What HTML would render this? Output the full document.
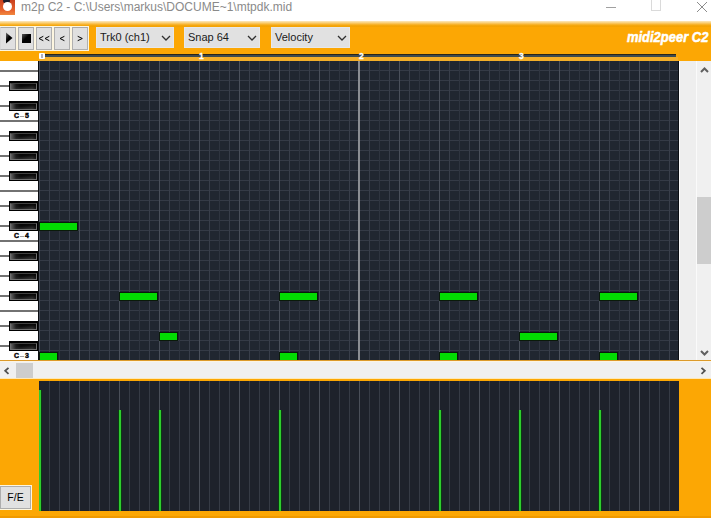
<!DOCTYPE html>
<html><head><meta charset="utf-8"><style>
*{margin:0;padding:0;box-sizing:border-box}
html,body{width:711px;height:518px;overflow:hidden;background:#fff;font-family:"Liberation Sans",sans-serif}
.a{position:absolute}
.btn{position:absolute;top:27px;width:16px;height:23px;background:#e0e0e0;border:1px solid #b0b0b0;border-top-color:#a8a8a8}
.dd{position:absolute;top:27px;height:21px;background:#e1e1e1;border:1px solid #e8e8e8;font-size:11px;color:#1a1a1a;line-height:19px;padding-left:3px}
.chev{position:absolute;top:7px;width:10px;height:6px}
.wk{position:absolute;left:0;width:38px;background:#727272}
.bk{position:absolute;left:9px;width:29px;height:10px;background:#000}
.bki{position:absolute;left:1px;top:2px;width:27px;height:7px;border:1px solid #707070;border-top-color:#404040;background:linear-gradient(to right,rgba(120,120,120,.8) 0,rgba(60,60,60,.4) 20%,rgba(0,0,0,0) 40%,rgba(0,0,0,0) 85%,rgba(0,0,0,.6) 100%),linear-gradient(172deg,#000 0,#0a0a0a 45%,#3a3a3a 100%)}
.lbl{position:absolute;font-size:7px;font-weight:bold;color:#000;line-height:7px;-webkit-text-stroke:0.4px #000}
.note{position:absolute;height:9px;border:1px solid #0a1a0a;background:#02dc02}
.vb{position:absolute;width:2px;background:#2ecc2e;box-shadow:1px 0 0 #0b3a12,-1px 0 0 #0b3a12}
.rd{position:absolute;top:52px;font-size:8.5px;font-weight:bold;color:#fff;line-height:8px;-webkit-text-stroke:0.3px #fff}
</style></head><body>

<div class="a" style="left:0;top:0;width:711px;height:20px;background:#fff"></div>
<div class="a" style="left:0;top:0;width:15px;height:15px;background:linear-gradient(180deg,#c8401e,#e8642e 70%,#f08840)"></div>
<div class="a" style="left:3px;top:-1px;width:7px;height:4px;background:#1a2030;border-radius:2px"></div>
<div class="a" style="left:2.5px;top:1.5px;width:9px;height:9px;background:#fff;border-radius:50%"></div>
<div class="a" style="left:21px;top:0px;font-size:12px;line-height:15px;color:#8a8a8a;white-space:pre">m2p C2 - C:\Users\markus\DOCUME~1\mtpdk.mid</div>
<div class="a" style="left:606px;top:7px;width:10px;height:1px;background:#a0a0a0"></div>
<div class="a" style="left:651px;top:-2px;width:10px;height:13px;border:1px solid #dadada"></div>
<svg class="a" style="left:696px;top:1px" width="12" height="12"><path d="M1 1L11 11M11 1L1 11" stroke="#8c8c8c" stroke-width="1"/></svg>
<div class="a" style="left:0;top:21px;width:711px;height:497px;background:#fca704"></div>
<div class="a" style="left:0;top:21px;width:711px;height:6px;background:linear-gradient(180deg,#fde8c0 0,#fbd890 20%,#f9c050 45%,#f5a810 70%,#f3a000 100%)"></div>
<div class="a" style="left:0;top:516px;width:711px;height:2px;background:#f09a00"></div>
<div class="a" style="left:0;top:26px;width:89px;height:25px;background:#fdf6e0"></div>
<div class="btn" style="left:0px;border-left-color:#d8d8d8"></div>
<div class="btn" style="left:18px"></div>
<div class="btn" style="left:36px"></div>
<div class="btn" style="left:54px"></div>
<div class="btn" style="left:72px"></div>
<svg class="a" style="left:0;top:27px" width="17" height="23"><defs><linearGradient id="pg" x1="0" y1="0" x2="1" y2="1"><stop offset="0" stop-color="#707070"/><stop offset="0.45" stop-color="#000"/></linearGradient></defs><path d="M6 5.5L12.5 11L6 16.5Z" fill="url(#pg)"/></svg>
<div class="a" style="left:22px;top:34px;width:9px;height:9px;background:linear-gradient(135deg,#555 0%,#000 45%,#000 100%)"></div>
<svg class="a" style="left:36px;top:27px" width="17" height="23"><path d="M7.3 9.3L3 11.5L7.3 13.7M13.3 9.3L9 11.5L13.3 13.7" stroke="#000" stroke-width="1" fill="none"/></svg>
<svg class="a" style="left:54px;top:27px" width="17" height="23"><path d="M10.4 9.3L6 11.5L10.4 13.7" stroke="#000" stroke-width="1" fill="none"/></svg>
<svg class="a" style="left:72px;top:27px" width="17" height="23"><path d="M5.7 9.3L10.3 11.5L5.7 13.7" stroke="#000" stroke-width="1" fill="none"/></svg>
<div class="dd" style="left:96px;width:78px">Trk0 (ch1)<svg class="chev" style="left:64px" width="10" height="6"><path d="M1 1L5 5L9 1" stroke="#303030" stroke-width="1.3" fill="none"/></svg></div>
<div class="dd" style="left:184px;width:76px">Snap 64<svg class="chev" style="left:62px" width="10" height="6"><path d="M1 1L5 5L9 1" stroke="#303030" stroke-width="1.3" fill="none"/></svg></div>
<div class="dd" style="left:271px;width:79px">Velocity<svg class="chev" style="left:65px" width="10" height="6"><path d="M1 1L5 5L9 1" stroke="#303030" stroke-width="1.3" fill="none"/></svg></div>
<div class="a" style="left:627px;top:30px;font-size:14px;font-weight:bold;font-style:italic;color:#fff;line-height:15px;white-space:pre;-webkit-text-stroke:0.5px #fff;transform-origin:0 0;transform:scaleX(0.925)">midi2peer C2</div>
<div class="a" style="left:39px;top:57px;width:639px;height:4px;background:#f3ae28"></div>
<div class="a" style="left:45px;top:54px;width:631px;height:1px;background:#2a2618"></div>
<div class="a" style="left:45px;top:55px;width:631px;height:2px;background:#3e4b4f"></div>
<div class="a" style="left:39px;top:53px;width:6px;height:6px;background:#fff;border-radius:1px"></div>
<div class="a" style="left:41px;top:54px;width:2px;height:4px;background:#b0b0c0"></div>
<div class="rd" style="left:199px">1</div>
<div class="rd" style="left:359px">2</div>
<div class="rd" style="left:519px">3</div>
<div class="a" style="left:0;top:61px;width:38px;height:299px;background:#fff"></div>
<div class="a" style="left:38px;top:61px;width:641px;height:299px;background:#202630;overflow:hidden">
<div class="a" style="left:0;top:9px;width:641px;height:1px;background:#343a46"></div>
<div class="a" style="left:0;top:19px;width:641px;height:1px;background:#343a46"></div>
<div class="a" style="left:0;top:29px;width:641px;height:1px;background:#343a46"></div>
<div class="a" style="left:0;top:39px;width:641px;height:1px;background:#343a46"></div>
<div class="a" style="left:0;top:49px;width:641px;height:1px;background:#343a46"></div>
<div class="a" style="left:0;top:59px;width:641px;height:1px;background:#343a46"></div>
<div class="a" style="left:0;top:69px;width:641px;height:1px;background:#343a46"></div>
<div class="a" style="left:0;top:79px;width:641px;height:1px;background:#343a46"></div>
<div class="a" style="left:0;top:89px;width:641px;height:1px;background:#343a46"></div>
<div class="a" style="left:0;top:99px;width:641px;height:1px;background:#343a46"></div>
<div class="a" style="left:0;top:109px;width:641px;height:1px;background:#343a46"></div>
<div class="a" style="left:0;top:119px;width:641px;height:1px;background:#343a46"></div>
<div class="a" style="left:0;top:129px;width:641px;height:1px;background:#343a46"></div>
<div class="a" style="left:0;top:139px;width:641px;height:1px;background:#343a46"></div>
<div class="a" style="left:0;top:149px;width:641px;height:1px;background:#343a46"></div>
<div class="a" style="left:0;top:159px;width:641px;height:1px;background:#343a46"></div>
<div class="a" style="left:0;top:169px;width:641px;height:1px;background:#343a46"></div>
<div class="a" style="left:0;top:179px;width:641px;height:1px;background:#343a46"></div>
<div class="a" style="left:0;top:189px;width:641px;height:1px;background:#343a46"></div>
<div class="a" style="left:0;top:199px;width:641px;height:1px;background:#343a46"></div>
<div class="a" style="left:0;top:209px;width:641px;height:1px;background:#343a46"></div>
<div class="a" style="left:0;top:219px;width:641px;height:1px;background:#343a46"></div>
<div class="a" style="left:0;top:229px;width:641px;height:1px;background:#343a46"></div>
<div class="a" style="left:0;top:239px;width:641px;height:1px;background:#343a46"></div>
<div class="a" style="left:0;top:249px;width:641px;height:1px;background:#343a46"></div>
<div class="a" style="left:0;top:259px;width:641px;height:1px;background:#343a46"></div>
<div class="a" style="left:0;top:269px;width:641px;height:1px;background:#343a46"></div>
<div class="a" style="left:0;top:279px;width:641px;height:1px;background:#343a46"></div>
<div class="a" style="left:0;top:289px;width:641px;height:1px;background:#343a46"></div>
<div class="a" style="left:0;top:299px;width:641px;height:1px;background:#343a46"></div>
<div class="a" style="left:1px;top:0;width:1px;height:299px;background:#4a505b"></div>
<div class="a" style="left:11px;top:0;width:1px;height:299px;background:#383e4a"></div>
<div class="a" style="left:21px;top:0;width:1px;height:299px;background:#2e343f"></div>
<div class="a" style="left:31px;top:0;width:1px;height:299px;background:#383e4a"></div>
<div class="a" style="left:41px;top:0;width:1px;height:299px;background:#4a505b"></div>
<div class="a" style="left:51px;top:0;width:1px;height:299px;background:#383e4a"></div>
<div class="a" style="left:61px;top:0;width:1px;height:299px;background:#2e343f"></div>
<div class="a" style="left:71px;top:0;width:1px;height:299px;background:#383e4a"></div>
<div class="a" style="left:81px;top:0;width:1px;height:299px;background:#4a505b"></div>
<div class="a" style="left:91px;top:0;width:1px;height:299px;background:#383e4a"></div>
<div class="a" style="left:101px;top:0;width:1px;height:299px;background:#2e343f"></div>
<div class="a" style="left:111px;top:0;width:1px;height:299px;background:#383e4a"></div>
<div class="a" style="left:121px;top:0;width:1px;height:299px;background:#4a505b"></div>
<div class="a" style="left:131px;top:0;width:1px;height:299px;background:#383e4a"></div>
<div class="a" style="left:141px;top:0;width:1px;height:299px;background:#2e343f"></div>
<div class="a" style="left:151px;top:0;width:1px;height:299px;background:#383e4a"></div>
<div class="a" style="left:161px;top:0;width:1px;height:299px;background:#4a505b"></div>
<div class="a" style="left:171px;top:0;width:1px;height:299px;background:#383e4a"></div>
<div class="a" style="left:181px;top:0;width:1px;height:299px;background:#2e343f"></div>
<div class="a" style="left:191px;top:0;width:1px;height:299px;background:#383e4a"></div>
<div class="a" style="left:201px;top:0;width:1px;height:299px;background:#4a505b"></div>
<div class="a" style="left:211px;top:0;width:1px;height:299px;background:#383e4a"></div>
<div class="a" style="left:221px;top:0;width:1px;height:299px;background:#2e343f"></div>
<div class="a" style="left:231px;top:0;width:1px;height:299px;background:#383e4a"></div>
<div class="a" style="left:241px;top:0;width:1px;height:299px;background:#4a505b"></div>
<div class="a" style="left:251px;top:0;width:1px;height:299px;background:#383e4a"></div>
<div class="a" style="left:261px;top:0;width:1px;height:299px;background:#2e343f"></div>
<div class="a" style="left:271px;top:0;width:1px;height:299px;background:#383e4a"></div>
<div class="a" style="left:281px;top:0;width:1px;height:299px;background:#4a505b"></div>
<div class="a" style="left:291px;top:0;width:1px;height:299px;background:#383e4a"></div>
<div class="a" style="left:301px;top:0;width:1px;height:299px;background:#2e343f"></div>
<div class="a" style="left:311px;top:0;width:1px;height:299px;background:#383e4a"></div>
<div class="a" style="left:321px;top:0;width:1px;height:299px;background:#4a505b"></div>
<div class="a" style="left:331px;top:0;width:1px;height:299px;background:#383e4a"></div>
<div class="a" style="left:341px;top:0;width:1px;height:299px;background:#2e343f"></div>
<div class="a" style="left:351px;top:0;width:1px;height:299px;background:#383e4a"></div>
<div class="a" style="left:361px;top:0;width:1px;height:299px;background:#4a505b"></div>
<div class="a" style="left:371px;top:0;width:1px;height:299px;background:#383e4a"></div>
<div class="a" style="left:381px;top:0;width:1px;height:299px;background:#2e343f"></div>
<div class="a" style="left:391px;top:0;width:1px;height:299px;background:#383e4a"></div>
<div class="a" style="left:401px;top:0;width:1px;height:299px;background:#4a505b"></div>
<div class="a" style="left:411px;top:0;width:1px;height:299px;background:#383e4a"></div>
<div class="a" style="left:421px;top:0;width:1px;height:299px;background:#2e343f"></div>
<div class="a" style="left:431px;top:0;width:1px;height:299px;background:#383e4a"></div>
<div class="a" style="left:441px;top:0;width:1px;height:299px;background:#4a505b"></div>
<div class="a" style="left:451px;top:0;width:1px;height:299px;background:#383e4a"></div>
<div class="a" style="left:461px;top:0;width:1px;height:299px;background:#2e343f"></div>
<div class="a" style="left:471px;top:0;width:1px;height:299px;background:#383e4a"></div>
<div class="a" style="left:481px;top:0;width:1px;height:299px;background:#4a505b"></div>
<div class="a" style="left:491px;top:0;width:1px;height:299px;background:#383e4a"></div>
<div class="a" style="left:501px;top:0;width:1px;height:299px;background:#2e343f"></div>
<div class="a" style="left:511px;top:0;width:1px;height:299px;background:#383e4a"></div>
<div class="a" style="left:521px;top:0;width:1px;height:299px;background:#4a505b"></div>
<div class="a" style="left:531px;top:0;width:1px;height:299px;background:#383e4a"></div>
<div class="a" style="left:541px;top:0;width:1px;height:299px;background:#2e343f"></div>
<div class="a" style="left:551px;top:0;width:1px;height:299px;background:#383e4a"></div>
<div class="a" style="left:561px;top:0;width:1px;height:299px;background:#4a505b"></div>
<div class="a" style="left:571px;top:0;width:1px;height:299px;background:#383e4a"></div>
<div class="a" style="left:581px;top:0;width:1px;height:299px;background:#2e343f"></div>
<div class="a" style="left:591px;top:0;width:1px;height:299px;background:#383e4a"></div>
<div class="a" style="left:601px;top:0;width:1px;height:299px;background:#4a505b"></div>
<div class="a" style="left:611px;top:0;width:1px;height:299px;background:#383e4a"></div>
<div class="a" style="left:621px;top:0;width:1px;height:299px;background:#2e343f"></div>
<div class="a" style="left:631px;top:0;width:1px;height:299px;background:#383e4a"></div>
<div class="a" style="left:0;top:0;width:1px;height:299px;background:#0a0c10"></div>
<div class="a" style="left:320px;top:0;width:2px;height:299px;background:#8a8d92"></div>
<div class="a" style="left:640px;top:0;width:1px;height:299px;background:#0c0f14"></div>
</div>
<div class="wk" style="top:70px;height:2px"></div>
<div class="wk" style="top:85px;width:9px;height:2px"></div>
<div class="bk" style="top:81px"><div class="bki"></div></div>
<div class="wk" style="top:105px;width:9px;height:2px"></div>
<div class="bk" style="top:101px"><div class="bki"></div></div>
<div class="wk" style="top:120px;height:2px"></div>
<div class="lbl" style="top:112px;left:14px">C</div><div class="a" style="top:116px;left:20px;width:4px;height:1px;background:#a0a0a0"></div><div class="lbl" style="top:112px;left:25px">5</div>
<div class="wk" style="top:135px;width:9px;height:2px"></div>
<div class="bk" style="top:131px"><div class="bki"></div></div>
<div class="wk" style="top:155px;width:9px;height:2px"></div>
<div class="bk" style="top:151px"><div class="bki"></div></div>
<div class="wk" style="top:175px;width:9px;height:2px"></div>
<div class="bk" style="top:171px"><div class="bki"></div></div>
<div class="wk" style="top:190px;height:2px"></div>
<div class="wk" style="top:205px;width:9px;height:2px"></div>
<div class="bk" style="top:201px"><div class="bki"></div></div>
<div class="wk" style="top:225px;width:9px;height:2px"></div>
<div class="bk" style="top:221px"><div class="bki"></div></div>
<div class="wk" style="top:240px;height:2px"></div>
<div class="lbl" style="top:232px;left:14px">C</div><div class="a" style="top:236px;left:20px;width:4px;height:1px;background:#a0a0a0"></div><div class="lbl" style="top:232px;left:25px">4</div>
<div class="wk" style="top:255px;width:9px;height:2px"></div>
<div class="bk" style="top:251px"><div class="bki"></div></div>
<div class="wk" style="top:275px;width:9px;height:2px"></div>
<div class="bk" style="top:271px"><div class="bki"></div></div>
<div class="wk" style="top:295px;width:9px;height:2px"></div>
<div class="bk" style="top:291px"><div class="bki"></div></div>
<div class="wk" style="top:310px;height:2px"></div>
<div class="wk" style="top:325px;width:9px;height:2px"></div>
<div class="bk" style="top:321px"><div class="bki"></div></div>
<div class="wk" style="top:345px;width:9px;height:2px"></div>
<div class="bk" style="top:341px"><div class="bki"></div></div>
<div class="wk" style="top:360px;height:2px"></div>
<div class="lbl" style="top:352px;left:14px">C</div><div class="a" style="top:356px;left:20px;width:4px;height:1px;background:#a0a0a0"></div><div class="lbl" style="top:352px;left:25px">3</div>
<div class="a" style="left:38px;top:61px;width:640px;height:299px;overflow:hidden">
<div class="note" style="left:1px;top:161px;width:39px"></div>
<div class="note" style="left:81px;top:231px;width:39px"></div>
<div class="note" style="left:241px;top:231px;width:39px"></div>
<div class="note" style="left:401px;top:231px;width:39px"></div>
<div class="note" style="left:561px;top:231px;width:39px"></div>
<div class="note" style="left:121px;top:271px;width:19px"></div>
<div class="note" style="left:481px;top:271px;width:39px"></div>
<div class="note" style="left:1px;top:291px;width:19px"></div>
<div class="note" style="left:241px;top:291px;width:19px"></div>
<div class="note" style="left:401px;top:291px;width:19px"></div>
<div class="note" style="left:561px;top:291px;width:19px"></div>
</div>
<div class="a" style="left:679px;top:61px;width:18px;height:299px;background:#eeeeee;border-left:1px solid #fafafa"></div>
<div class="a" style="left:696px;top:61px;width:15px;height:299px;background:#f0f0f0;border-left:1px solid #fafafa"></div>
<div class="a" style="left:697px;top:197px;width:14px;height:67px;background:#cdcdcd"></div>
<svg class="a" style="left:699px;top:66px" width="11" height="8"><path d="M2 6L5.5 2.5L9 6" stroke="#606060" stroke-width="2" fill="none"/></svg>
<svg class="a" style="left:699px;top:349px" width="11" height="8"><path d="M2 2L5.5 5.5L9 2" stroke="#606060" stroke-width="2" fill="none"/></svg>
<div class="a" style="left:0;top:360px;width:711px;height:1px;background:#dc9a2a"></div>
<div class="a" style="left:0;top:361px;width:711px;height:17px;background:#f0f0f0;border-top:1px solid #fcf4e4"></div>
<div class="a" style="left:16px;top:363px;width:17px;height:15px;background:#cdcdcd"></div>
<svg class="a" style="left:2px;top:365px" width="8" height="11"><path d="M6.5 2.8L3.2 5.8L6.5 8.8" stroke="#505050" stroke-width="1.8" fill="none"/></svg>
<svg class="a" style="left:700px;top:365px" width="8" height="11"><path d="M1.5 2.8L4.8 5.8L1.5 8.8" stroke="#505050" stroke-width="1.8" fill="none"/></svg>
<div class="a" style="left:0;top:378px;width:711px;height:1px;background:#fde8b8"></div>
<div class="a" style="left:39px;top:381px;width:640px;height:130px;background:#1e222b;overflow:hidden">
<div class="a" style="left:10px;top:0;width:1px;height:130px;background:#363b45"></div>
<div class="a" style="left:20px;top:0;width:1px;height:130px;background:#363b45"></div>
<div class="a" style="left:30px;top:0;width:1px;height:130px;background:#363b45"></div>
<div class="a" style="left:40px;top:0;width:1px;height:130px;background:#4a4f59"></div>
<div class="a" style="left:50px;top:0;width:1px;height:130px;background:#363b45"></div>
<div class="a" style="left:60px;top:0;width:1px;height:130px;background:#363b45"></div>
<div class="a" style="left:70px;top:0;width:1px;height:130px;background:#363b45"></div>
<div class="a" style="left:80px;top:0;width:1px;height:130px;background:#4a4f59"></div>
<div class="a" style="left:90px;top:0;width:1px;height:130px;background:#363b45"></div>
<div class="a" style="left:100px;top:0;width:1px;height:130px;background:#363b45"></div>
<div class="a" style="left:110px;top:0;width:1px;height:130px;background:#363b45"></div>
<div class="a" style="left:120px;top:0;width:1px;height:130px;background:#4a4f59"></div>
<div class="a" style="left:130px;top:0;width:1px;height:130px;background:#363b45"></div>
<div class="a" style="left:140px;top:0;width:1px;height:130px;background:#363b45"></div>
<div class="a" style="left:150px;top:0;width:1px;height:130px;background:#363b45"></div>
<div class="a" style="left:160px;top:0;width:1px;height:130px;background:#4a4f59"></div>
<div class="a" style="left:170px;top:0;width:1px;height:130px;background:#363b45"></div>
<div class="a" style="left:180px;top:0;width:1px;height:130px;background:#363b45"></div>
<div class="a" style="left:190px;top:0;width:1px;height:130px;background:#363b45"></div>
<div class="a" style="left:200px;top:0;width:1px;height:130px;background:#4a4f59"></div>
<div class="a" style="left:210px;top:0;width:1px;height:130px;background:#363b45"></div>
<div class="a" style="left:220px;top:0;width:1px;height:130px;background:#363b45"></div>
<div class="a" style="left:230px;top:0;width:1px;height:130px;background:#363b45"></div>
<div class="a" style="left:240px;top:0;width:1px;height:130px;background:#4a4f59"></div>
<div class="a" style="left:250px;top:0;width:1px;height:130px;background:#363b45"></div>
<div class="a" style="left:260px;top:0;width:1px;height:130px;background:#363b45"></div>
<div class="a" style="left:270px;top:0;width:1px;height:130px;background:#363b45"></div>
<div class="a" style="left:280px;top:0;width:1px;height:130px;background:#4a4f59"></div>
<div class="a" style="left:290px;top:0;width:1px;height:130px;background:#363b45"></div>
<div class="a" style="left:300px;top:0;width:1px;height:130px;background:#363b45"></div>
<div class="a" style="left:310px;top:0;width:1px;height:130px;background:#363b45"></div>
<div class="a" style="left:320px;top:0;width:1px;height:130px;background:#4a4f59"></div>
<div class="a" style="left:330px;top:0;width:1px;height:130px;background:#363b45"></div>
<div class="a" style="left:340px;top:0;width:1px;height:130px;background:#363b45"></div>
<div class="a" style="left:350px;top:0;width:1px;height:130px;background:#363b45"></div>
<div class="a" style="left:360px;top:0;width:1px;height:130px;background:#4a4f59"></div>
<div class="a" style="left:370px;top:0;width:1px;height:130px;background:#363b45"></div>
<div class="a" style="left:380px;top:0;width:1px;height:130px;background:#363b45"></div>
<div class="a" style="left:390px;top:0;width:1px;height:130px;background:#363b45"></div>
<div class="a" style="left:400px;top:0;width:1px;height:130px;background:#4a4f59"></div>
<div class="a" style="left:410px;top:0;width:1px;height:130px;background:#363b45"></div>
<div class="a" style="left:420px;top:0;width:1px;height:130px;background:#363b45"></div>
<div class="a" style="left:430px;top:0;width:1px;height:130px;background:#363b45"></div>
<div class="a" style="left:440px;top:0;width:1px;height:130px;background:#4a4f59"></div>
<div class="a" style="left:450px;top:0;width:1px;height:130px;background:#363b45"></div>
<div class="a" style="left:460px;top:0;width:1px;height:130px;background:#363b45"></div>
<div class="a" style="left:470px;top:0;width:1px;height:130px;background:#363b45"></div>
<div class="a" style="left:480px;top:0;width:1px;height:130px;background:#4a4f59"></div>
<div class="a" style="left:490px;top:0;width:1px;height:130px;background:#363b45"></div>
<div class="a" style="left:500px;top:0;width:1px;height:130px;background:#363b45"></div>
<div class="a" style="left:510px;top:0;width:1px;height:130px;background:#363b45"></div>
<div class="a" style="left:520px;top:0;width:1px;height:130px;background:#4a4f59"></div>
<div class="a" style="left:530px;top:0;width:1px;height:130px;background:#363b45"></div>
<div class="a" style="left:540px;top:0;width:1px;height:130px;background:#363b45"></div>
<div class="a" style="left:550px;top:0;width:1px;height:130px;background:#363b45"></div>
<div class="a" style="left:560px;top:0;width:1px;height:130px;background:#4a4f59"></div>
<div class="a" style="left:570px;top:0;width:1px;height:130px;background:#363b45"></div>
<div class="a" style="left:580px;top:0;width:1px;height:130px;background:#363b45"></div>
<div class="a" style="left:590px;top:0;width:1px;height:130px;background:#363b45"></div>
<div class="a" style="left:600px;top:0;width:1px;height:130px;background:#4a4f59"></div>
<div class="a" style="left:610px;top:0;width:1px;height:130px;background:#363b45"></div>
<div class="a" style="left:620px;top:0;width:1px;height:130px;background:#363b45"></div>
<div class="a" style="left:630px;top:0;width:1px;height:130px;background:#363b45"></div>
<div class="vb" style="left:0px;top:9px;height:121px"></div>
<div class="vb" style="left:80px;top:29px;height:101px"></div>
<div class="vb" style="left:120px;top:29px;height:101px"></div>
<div class="vb" style="left:240px;top:29px;height:101px"></div>
<div class="vb" style="left:400px;top:29px;height:101px"></div>
<div class="vb" style="left:480px;top:29px;height:101px"></div>
<div class="vb" style="left:560px;top:29px;height:101px"></div>
</div>
<div class="a" style="left:0;top:485px;width:32px;height:25px;background:#fdf6e0"></div>
<div class="a" style="left:0;top:486px;width:31px;height:23px;background:#e1e1e1;border:1px solid #adadad;font-size:10.5px;line-height:21px;text-align:center;color:#000">F/E</div>
</body></html>
